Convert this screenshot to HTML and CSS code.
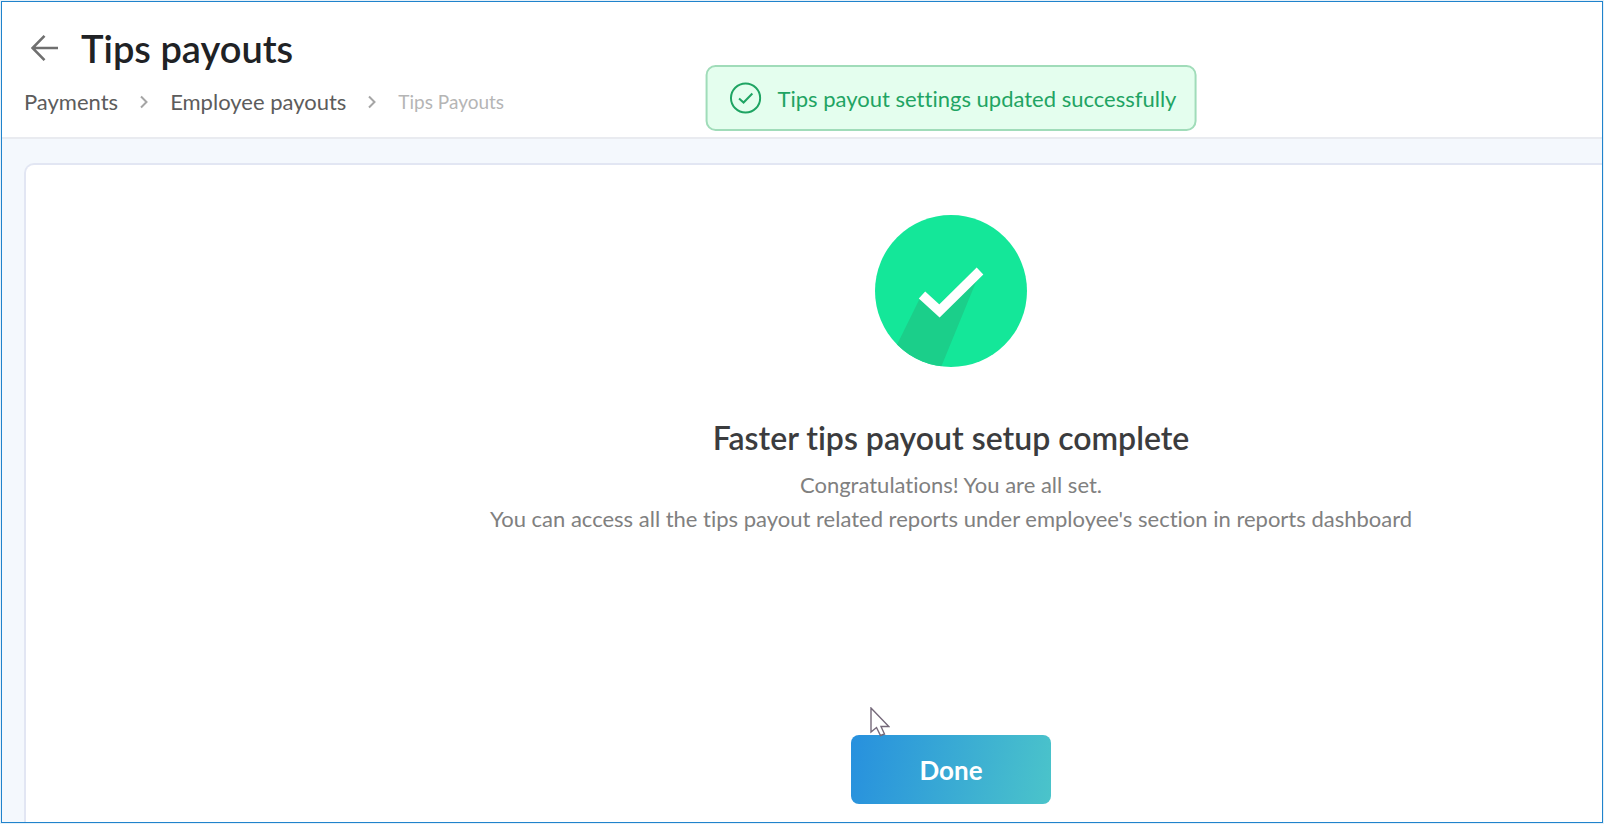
FILE: index.html
```html
<!DOCTYPE html>
<html lang="en">
<head>
    <meta charset="UTF-8">
    <meta name="viewport" content="width=device-width, initial-scale=1.0">
    <title>Tips payouts</title>
    <link rel="stylesheet" href="styles.css">
</head>
<body>
    <div class="frame">
        <div class="page">
            <header class="page-header">
                <div class="title-row">
                    <a href="#" class="back-link" aria-label="Back">
                        <svg width="28" height="28" viewBox="0 0 28 28" fill="none" stroke="#6f6f6f" stroke-width="2.6">
                            <path d="M27 14H1.500M13.500 1.800L1.500 14L13.500 26.200"/>
                        </svg>
                    </a>
                    <h1>Tips payouts</h1>
                </div>
                <nav class="breadcrumbs" aria-label="Breadcrumb">
                    <a href="#">Payments</a>
                    <svg class="chevron" width="8" height="14" viewBox="0 0 8 14"><path d="M1 1.500L6.500 7L1 12.500"/></svg>
                    <a href="#">Employee payouts</a>
                    <svg class="chevron" width="8" height="14" viewBox="0 0 8 14"><path d="M1 1.500L6.500 7L1 12.500"/></svg>
                    <span class="current">Tips Payouts</span>
                </nav>
            </header>

            <!-- Success notification -->
            <div class="toast" role="status">
                <svg width="32" height="32" viewBox="0 0 32 32" fill="none" stroke="#1fa463" stroke-width="2">
                    <circle cx="16" cy="16" r="14.600"/>
                    <path d="M9.500 16.500L14 20.500L22.800 11.500"/>
                </svg>
                <span>Tips payout settings updated successfully</span>
            </div>

            <main class="card">
                <svg class="success-icon" width="152" height="152" viewBox="0 0 152 152">
                    <defs>
                        <clipPath id="disc"><circle cx="76" cy="76" r="76"/></clipPath>
                    </defs>
                    <circle cx="76" cy="76" r="76" fill="#14e799"/>
                    <path d="M45 83L12 150L62 162L103 62L64.500 96Z" fill="#1bcf8a" clip-path="url(#disc)"/>
                    <path d="M47 80L64.500 96L105 56" fill="none" stroke="#fff" stroke-width="9.500"/>
                </svg>
                <h2>Faster tips payout setup complete</h2>
                <p>Congratulations! You are all set.<br>You can access all the tips payout related reports under employee's section in reports dashboard</p>
                <div class="actions">
                    <button type="button">Done</button>
                    <!-- Mouse pointer -->
                    <svg class="pointer" width="20" height="30" viewBox="0 0 20 30">
                        <path d="M1 1V25L6.500 20.500L10.500 28.500L14.500 27L11 19.500H18.800Z" fill="#fff" stroke="#75697a" stroke-width="1.400"/>
                    </svg>
                </div>
            </main>
        </div>
    </div>
</body>
</html>
```
FILE: styles.css
```css
:root {
    --frame-color: #2083cc;
    --page-bg: #f4f8fd;
    --line-color: #e9ebf0;
    --card-line: #e2e6f3;
    --success: #1fa463;
}

* {
    box-sizing: border-box;
}

body {
    margin: 0;
    padding: 1px;
    background-color: #e6f1f9;
    font-family: Lato, "Open Sans", sans-serif;
    font-size: 22px;
    font-variant-ligatures: none;
    color: #5c5c5c;
}

a {
    color: inherit;
    text-decoration: none;
}

.frame {
    height: calc(100vh - 2px);
    overflow: hidden;
    border: 1px solid var(--frame-color);
    background-color: var(--page-bg);
}

/* The page is wider than the frame and runs off its right edge */
.page {
    position: relative;
    display: flex;
    flex-direction: column;
    width: calc(100% + 298px);
    min-height: 100%;
}

/* Header */
.page-header {
    padding: 24px 22px 21px;
    background-color: #fff;
    border-bottom: 2px solid var(--line-color);
}

.title-row {
    display: flex;
    align-items: center;
    gap: 22px;
    padding-left: 7px;
}

.back-link {
    display: flex;
}

h1 {
    margin: 0;
    font-size: 38px;
    line-height: 44px;
    font-weight: 600;
    color: #202225;
}

.breadcrumbs {
    display: flex;
    align-items: center;
    gap: 22px;
    margin-top: 18px;
    line-height: 28px;
}

.chevron {
    fill: none;
    stroke: #a5a5a5;
    stroke-width: 2;
}

.current {
    font-size: 19px;
    color: #b5b5b5;
}

/* Toast */
.toast {
    position: absolute;
    top: 63px;
    left: 50%;
    transform: translateX(-50%);
    display: flex;
    align-items: center;
    gap: 16px;
    height: 66px;
    padding: 0 18px 0 22px;
    white-space: nowrap;
    color: var(--success);
    background-color: #e4feee;
    border: 2px solid #a0dcb9;
    border-radius: 10px;
}

/* Card */
.card {
    flex: 1;
    display: flex;
    flex-direction: column;
    align-items: center;
    margin: 24px 22px 0;
    padding: 50px 24px 18px;
    text-align: center;
    background-color: #fff;
    border: 2px solid var(--card-line);
    border-bottom: 0;
    border-radius: 10px 10px 0 0;
}

h2 {
    margin: 51px 0 0;
    font-size: 32px;
    line-height: 40px;
    font-weight: 600;
    color: #3b3c3e;
}

p {
    margin: 10px 0 0;
    line-height: 34px;
    color: #808080;
}

.actions {
    position: relative;
    margin-top: auto;
}

button {
    width: 200px;
    height: 69px;
    border: 0;
    border-radius: 8px;
    background: linear-gradient(100deg, #2790de, #4bc4ca);
    color: #fff;
    font-family: inherit;
    font-size: 26px;
    font-weight: 700;
    cursor: pointer;
}

.pointer {
    position: absolute;
    left: 19px;
    top: -28px;
}
```
